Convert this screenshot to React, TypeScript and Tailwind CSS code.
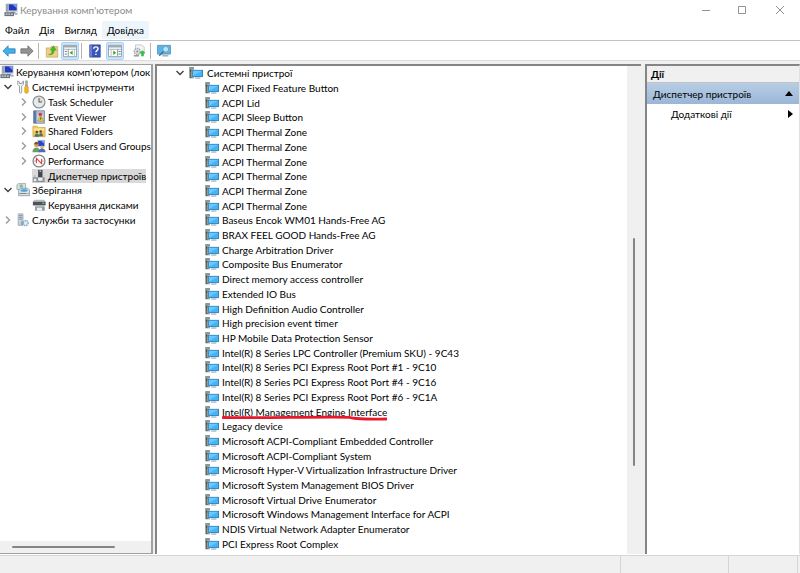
import { useState, type ReactNode } from 'react';
import clsx from 'clsx';

interface TreeItem {
    label: string;
    icon: ReactNode;
    level: number;
    expanded?: boolean;
    selected?: boolean;
}

/* ---------- Icons ---------- */

const Icon = ({ children }: { children: ReactNode }) => (
    <svg viewBox="0 0 16 16" className="h-3.5 w-3.5 shrink-0" aria-hidden="true">
        {children}
    </svg>
);

const ComputerIcon = () => (
    <Icon>
        <path d="M4 0.500h11.500v9.500H4z" fill="#c3ccd8" />
        <path d="M5.500 1.500h9v7h-9z" fill="#2139b8" />
        <path d="M9.500 1.500h5v4.500z" fill="#7d9df0" />
        <path d="M2 1h3v9H2z" fill="#9aa5b1" />
        <path d="M8 10h5v1.500H8z" fill="#8d99a8" />
        <path d="M0.500 10.500h11v4.500h-11z" fill="#6a747e" />
        <path d="M2 12h2v1.500H2zM5 12h2v1.500H5zM8 12h2v1.500H8z" fill="#d8dee4" />
        <path d="M11 11h4.500v2.500h-3z" fill="#a9b2bc" />
    </Icon>
);

const ToolsIcon = () => (
    <Icon>
        <path d="M2 1v4l2 2v7c0 1.300 2.500 1.300 2.500 0V7l2-2V1L7 2.500V4H4V2.500z" fill="#f4f4f4" stroke="#888" strokeWidth="0.900" />
        <path d="M11 1h2v6h-2z" fill="#bbb" stroke="#777" strokeWidth="0.600" />
        <rect x="10" y="7" width="4" height="8" rx="1.500" fill="#f2b91c" stroke="#bb8410" strokeWidth="0.600" />
    </Icon>
);

const ClockIcon = () => (
    <Icon>
        <circle cx="8" cy="8" r="6.800" fill="#e4e9ee" stroke="#8c9196" strokeWidth="1.400" />
        <path d="M8 8V3A5 5 0 0 1 13 8z" fill="#f3d9a5" />
        <path d="M8 3.500V8h3.500" fill="none" stroke="#4c6075" strokeWidth="1.200" />
    </Icon>
);

const EventIcon = () => (
    <Icon>
        <rect x="2" y="1" width="12" height="14" fill="#c3d2e6" stroke="#66768e" />
        <path d="M2 1h3v14H2z" fill="#5a77ae" />
        <path d="M6 3.500h7M6 12.500h7" stroke="#7d8da5" strokeWidth="0.800" />
        <circle cx="9.500" cy="5" r="2" fill="#d63a31" />
        <path d="M10 6.500l3.500 6h-7z" fill="#f7cf2d" stroke="#ac8714" strokeWidth="0.600" />
        <path d="M10 8.500v2.500" stroke="#333" />
    </Icon>
);

const SharedIcon = () => (
    <Icon>
        <path d="M1 2.500h5L7.500 4H15v10.500H1z" fill="#f1c75c" stroke="#c79b3a" strokeWidth="0.700" />
        <path d="M2 5h12v2.500H2z" fill="#ffe49b" />
        <circle cx="5.500" cy="9" r="1.400" fill="#5b4730" />
        <circle cx="10" cy="8.500" r="1.400" fill="#5b4730" />
        <path d="M3 14.500c0-5 5-5 5 0zM8 14c0-5 4.500-5 4.500 0z" fill="#3c7a70" />
    </Icon>
);

const UsersIcon = () => (
    <Icon>
        <path d="M6 1h9v8H6z" fill="#c3ccd8" />
        <path d="M7 2h7v6H7z" fill="#2745c4" />
        <path d="M10 2h4v3.500z" fill="#7fa0f0" />
        <circle cx="5" cy="6.500" r="2.600" fill="#d39a55" />
        <path d="M2.500 6c0-4 5-4 5 0z" fill="#7c5221" />
        <path d="M0.500 15c0-7 9-7 9 0z" fill="#6d9c6b" />
        <circle cx="11.500" cy="9.500" r="2" fill="#e2b37b" />
        <path d="M7.500 15c0-5.500 8-5.500 8 0z" fill="#4b6cb0" />
    </Icon>
);

const PerformanceIcon = () => (
    <Icon>
        <circle cx="8" cy="8" r="6.800" fill="#fff" stroke="#858585" strokeWidth="1.500" />
        <path d="M3.500 9V7M12.500 9V7" stroke="#999" />
        <path d="M5 10.500V5l6 6V5.500" fill="none" stroke="#d84040" strokeWidth="1.200" />
    </Icon>
);

const DeviceIcon = () => (
    <Icon>
        <path d="M7 1h5v8.500H7z" fill="#43494f" />
        <path d="M8.500 1.500h2V3.500h-2z" fill="#aab0b5" />
        <path d="M2.500 7h1.500v3H2.500z" fill="#b4babf" />
        <path d="M1 9.500h13.500v5.500H1z" fill="#8b9197" />
        <path d="M2 11h3v3H2zM7 10h5v3.500H7z" fill="#eceeef" />
    </Icon>
);

const StorageIcon = () => (
    <Icon>
        <path d="M1 2l2-1.500h8v7H1z" fill="#d5dfe6" stroke="#84929c" strokeWidth="0.700" />
        <circle cx="6" cy="3.500" r="2" fill="#7cc583" />
        <path d="M3 8l2-2h8.500l2 2v6.500H3z" fill="#dde3e8" stroke="#7a868f" strokeWidth="0.800" />
        <path d="M5 8.500c0-2 8.500-2 8.500 0s-8.500 2-8.500 0z" fill="#44a5de" />
        <path d="M4 12h8" stroke="#6a7883" />
        <path d="M13 12h1.500" stroke="#34b648" />
    </Icon>
);

const DiskIcon = () => (
    <Icon>
        <path d="M1 4h14.500v4.500H1z" fill="#4e5358" />
        <path d="M1.500 3.500L3 2h10.500L15 3.500z" fill="#b4babf" />
        <path d="M11.500 6H14" stroke="#55e070" strokeWidth="1.200" />
        <path d="M3.500 9.500h11v5h-11z" fill="#8f969c" />
        <path d="M5.500 11h6v3.500h-6z" fill="#eceeef" />
    </Icon>
);

const ServicesIcon = () => (
    <Icon>
        <path d="M2.500 1H8v13H2.500z" fill="#cdd6de" stroke="#8898a5" strokeWidth="0.800" />
        <path d="M3.500 3H7M3.500 5H7M3.500 7H7" stroke="#6b8092" strokeWidth="0.900" />
        <circle cx="11" cy="11.500" r="2.900" fill="#e2e9ef" stroke="#7ba6cb" strokeWidth="1.500" strokeDasharray="1.600 0.800" />
        <path d="M5.500 9.500h3V14h-3z" fill="#86abc9" />
    </Icon>
);

const SystemDeviceIcon = () => (
    <Icon>
        <path d="M0.500 1.500h5V14h-5z" fill="#62686d" />
        <path d="M0.500 1.500h5v2h-5z" fill="#8d9398" />
        <path d="M1 5.500h2.500" stroke="#3b4044" strokeWidth="1.500" />
        <path d="M1.500 3.500h2" stroke="#65c877" />
        <path d="M3 4h13v9H3z" fill="#dcebf5" />
        <path d="M3.500 4.500H16v8H3.500z" fill="#3580b4" />
        <path d="M4.500 5.500H15v6H4.500z" fill="#45b4f7" />
        <path d="M4.500 11.500v-6H15z" fill="#6cc8fb" />
        <path d="M7 13h6v1.500H7z" fill="#a3b5c2" />
    </Icon>
);

const Chevron = ({ open }: { open: boolean }) => (
    <svg viewBox="0 0 10 10" className="h-2.5 w-2.5" aria-hidden="true">
        <path
            d={open ? 'M1.500 3L5 6.500L8.500 3' : 'M3 1.500L6.500 5L3 8.500'}
            fill="none"
            stroke={open ? '#404040' : '#9a9a9a'}
            strokeWidth="1.400"
        />
    </svg>
);

/* ---------- Toolbar icons ---------- */

const BackIcon = () => (
    <Icon>
        <path d="M1 8l6-6v3.500h8v5H7V14z" fill="#3fb2ea" stroke="#2f7fb2" strokeWidth="0.900" />
    </Icon>
);

const ForwardIcon = () => (
    <Icon>
        <path d="M15 8L9 2v3.500H1v5h8V14z" fill="#949494" stroke="#6d6d6d" strokeWidth="0.900" />
    </Icon>
);

const FolderUpIcon = () => (
    <Icon>
        <path d="M1.500 4.500h4.500l1-1.500h7.500v12h-13z" fill="#ecd08a" stroke="#c4a254" strokeWidth="0.800" />
        <path d="M4 12c3 0 4-2 4-5H6l3.500-5L13 7h-2.500c0 4-2.500 6-6.500 5z" fill="#4cb725" stroke="#3c9a1f" strokeWidth="0.500" />
    </Icon>
);

const PaneIcon = ({ right = false }: { right?: boolean }) => (
    <Icon>
        <path d="M0.500 1.500h15v13h-15z" fill="#fff" stroke="#8f959a" />
        <path d="M1 2h14v2H1z" fill="#a2a8ad" />
        <path d="M1 6h14" stroke="#a4a9ae" />
        <path d={right ? 'M11 6v8' : 'M6 6v8'} stroke="#858b91" />
        <path d={right ? 'M12 8.500h2.500M12 11.500h2.500' : 'M2 8.500h2.500M2 11.500h2.500'} stroke="#5a6b7a" />
        <path d={right ? 'M6 7.500v5L9.500 10z' : 'M11 7.500v5L7.500 10z'} fill="#35b22b" />
        <path d={right ? 'M3.500 6v8' : 'M13 6v8'} stroke="#b4b8bb" />
    </Icon>
);

const HelpIcon = () => (
    <Icon>
        <path d="M2 1h12v14H2z" fill="#3a56b8" stroke="#2a3f90" strokeWidth="0.800" />
        <path d="M2.500 1.500h2v13h-2z" fill="#7088d8" />
        <path d="M6.500 5.500c0-3 5-3 5 0 0 2-2.500 1.700-2.500 4" fill="none" stroke="#fff" strokeWidth="1.600" />
        <path d="M8.200 11h1.700v1.700H8.200z" fill="#fff" />
    </Icon>
);

const ScanIcon = () => (
    <Icon>
        <path d="M4 1h7l3 2.500V11H4z" fill="#f2f3f4" stroke="#b4b8ba" strokeWidth="0.800" />
        <circle cx="6" cy="8.500" r="3.500" fill="#e2e4e6" stroke="#9aa0a5" strokeWidth="1.500" strokeDasharray="1.700 0.900" />
        <circle cx="6" cy="8.500" r="1.200" fill="#8a9196" />
        <path d="M2 13.500h6" stroke="#858b8f" strokeWidth="1.500" />
        <path d="M12 7l3.500 3.500h-2V14h-3v-3.500h-2z" fill="#2fc048" />
    </Icon>
);

const MonitorIcon = () => (
    <Icon>
        <path d="M0.500 1.500h15v10h-15z" fill="#58b6ea" stroke="#5f92b3" />
        <circle cx="10" cy="6" r="3.300" fill="#b9e5fb" stroke="#6792ac" strokeWidth="0.900" />
        <path d="M7.500 8.500L2.500 13.500" stroke="#397296" strokeWidth="1.600" />
        <path d="M6 13.500h7" stroke="#8fa9b9" strokeWidth="1.500" />
    </Icon>
);

/* ---------- Data ---------- */

const menuItems = ['Файл', 'Дія', 'Вигляд', 'Довідка'];

const treeItems: TreeItem[] = [
    { label: "Керування комп'ютером (лок", icon: <ComputerIcon />, level: 0 },
    { label: 'Системні інструменти', icon: <ToolsIcon />, level: 1, expanded: true },
    { label: 'Task Scheduler', icon: <ClockIcon />, level: 2, expanded: false },
    { label: 'Event Viewer', icon: <EventIcon />, level: 2, expanded: false },
    { label: 'Shared Folders', icon: <SharedIcon />, level: 2, expanded: false },
    { label: 'Local Users and Groups', icon: <UsersIcon />, level: 2, expanded: false },
    { label: 'Performance', icon: <PerformanceIcon />, level: 2, expanded: false },
    { label: 'Диспетчер пристроїв', icon: <DeviceIcon />, level: 2, selected: true },
    { label: 'Зберігання', icon: <StorageIcon />, level: 1, expanded: true },
    { label: 'Керування дисками', icon: <DiskIcon />, level: 2 },
    { label: 'Служби та застосунки', icon: <ServicesIcon />, level: 1, expanded: false },
];

const markedDevice = 'Intel(R) Management Engine Interface';

const devices = [
    'ACPI Fixed Feature Button',
    'ACPI Lid',
    'ACPI Sleep Button',
    'ACPI Thermal Zone',
    'ACPI Thermal Zone',
    'ACPI Thermal Zone',
    'ACPI Thermal Zone',
    'ACPI Thermal Zone',
    'ACPI Thermal Zone',
    'Baseus Encok WM01 Hands-Free AG',
    'BRAX FEEL GOOD Hands-Free AG',
    'Charge Arbitration Driver',
    'Composite Bus Enumerator',
    'Direct memory access controller',
    'Extended IO Bus',
    'High Definition Audio Controller',
    'High precision event timer',
    'HP Mobile Data Protection Sensor',
    'Intel(R) 8 Series LPC Controller (Premium SKU) - 9C43',
    'Intel(R) 8 Series PCI Express Root Port #1 - 9C10',
    'Intel(R) 8 Series PCI Express Root Port #4 - 9C16',
    'Intel(R) 8 Series PCI Express Root Port #6 - 9C1A',
    markedDevice,
    'Legacy device',
    'Microsoft ACPI-Compliant Embedded Controller',
    'Microsoft ACPI-Compliant System',
    'Microsoft Hyper-V Virtualization Infrastructure Driver',
    'Microsoft System Management BIOS Driver',
    'Microsoft Virtual Drive Enumerator',
    'Microsoft Windows Management Interface for ACPI',
    'NDIS Virtual Network Adapter Enumerator',
    'PCI Express Root Complex',
];

/* ---------- Parts ---------- */

const TitleBar = () => (
    <header className="flex h-5 items-center pl-1 text-[#8c8c8c]">
        <ComputerIcon />
        <h1 className="ml-0.5 flex-1">Керування комп'ютером</h1>
        <div className="flex h-full">
            <button type="button" aria-label="Згорнути" className="grid w-9 place-items-center">
                <svg viewBox="0 0 10 10" className="h-2.5 w-2.5"><path d="M1 5.500h8" stroke="#929292" /></svg>
            </button>
            <button type="button" aria-label="Розгорнути" className="grid w-9 place-items-center">
                <svg viewBox="0 0 10 10" className="h-2.5 w-2.5"><path d="M1.500 1.500h7v7h-7z" fill="none" stroke="#929292" /></svg>
            </button>
            <button type="button" aria-label="Закрити" className="grid w-10 place-items-center">
                <svg viewBox="0 0 10 10" className="h-2.5 w-2.5"><path d="M1 1l8 8M9 1L1 9" stroke="#929292" /></svg>
            </button>
        </div>
    </header>
);

const ToolButton = ({ label, active = false, children }: { label: string; active?: boolean; children: ReactNode }) => (
    <button
        type="button"
        aria-label={label}
        className={clsx('grid h-[18px] w-[18px] place-items-center', active && 'rounded-xs border border-[#a9d5f6] bg-[#cce6fb]')}
    >
        {children}
    </button>
);

const Separator = () => <span className="mr-1 ml-0.5 h-4 w-px bg-[#b4b4b4]" />;

const Toolbar = () => (
    <div className="flex h-5 items-center border-b border-[#dcdcdc]">
        <ToolButton label="Назад"><BackIcon /></ToolButton>
        <ToolButton label="Вперед"><ForwardIcon /></ToolButton>
        <Separator />
        <ToolButton label="На рівень вище"><FolderUpIcon /></ToolButton>
        <ToolButton label="Дерево консолі" active><PaneIcon /></ToolButton>
        <Separator />
        <ToolButton label="Довідка"><HelpIcon /></ToolButton>
        <span className="w-0.5" />
        <ToolButton label="Область дій" active><PaneIcon right /></ToolButton>
        <span className="w-1.5" />
        <ToolButton label="Оновити конфігурацію"><ScanIcon /></ToolButton>
        <Separator />
        <ToolButton label="Властивості"><MonitorIcon /></ToolButton>
    </div>
);

const TreeRow = ({ item }: { item: TreeItem }) => {
    const [open, setOpen] = useState(item.expanded ?? false);

    return (
        <li
            role="treeitem"
            aria-selected={item.selected ?? false}
            className={clsx('flex min-h-0 flex-1 items-center', item.level === 2 && 'pl-4')}
        >
            {item.level > 0 && (
                <span className="grid w-4 shrink-0 place-items-center">
                    {item.expanded !== undefined && (
                        <button type="button" aria-label={item.label} onClick={() => setOpen(!open)}>
                            <Chevron open={open} />
                        </button>
                    )}
                </span>
            )}
            <span className={clsx('flex items-center gap-0.5 whitespace-nowrap', item.selected && 'bg-[#d9d9d9]')}>
                {item.icon}
                {item.label}
            </span>
        </li>
    );
};

const ConsoleTree = () => (
    <nav className="flex w-[153px] shrink-0 flex-col overflow-hidden border-t border-r-2 border-b border-[#a0a0a0] bg-white">
        <ul role="tree" className="flex h-[162px] flex-col leading-[14px]">
            {treeItems.map((item) => (
                <TreeRow key={item.label} item={item} />
            ))}
        </ul>
        <div className="mt-auto flex h-3 items-center bg-[#f0f0f0] pr-9 pl-3">
            <span className="h-0.5 flex-1 rounded-full bg-[#858585]" />
        </div>
    </nav>
);

const Underline = () => (
    <svg
        viewBox="0 0 166 6"
        preserveAspectRatio="none"
        className="absolute top-2.5 left-0 h-1.5 w-full"
        aria-hidden="true"
    >
        <path d="M1 2.500C40 3.200 90 1.800 128 2.300C134 4 140 4.200 165 4" fill="none" stroke="#e8192c" strokeWidth="2.800" strokeLinecap="round" />
    </svg>
);

const DeviceList = () => (
    <main className="mr-0.5 flex min-w-0 flex-1 border-t-2 border-l-2 border-[#858585] bg-white">
        <ul className="flex h-[485px] min-w-0 flex-1 flex-col overflow-hidden pl-4 leading-[14px] whitespace-nowrap">
            <li className="flex min-h-0 flex-1 items-center">
                <button type="button" aria-label="Згорнути групу" className="mr-1 ml-0.5">
                    <Chevron open />
                </button>
                <span className="flex items-center gap-1">
                    <SystemDeviceIcon />
                    Системні пристрої
                </span>
            </li>
            {devices.map((name, i) => (
                <li key={i} className="flex min-h-0 flex-1 items-center gap-[3px] pl-8">
                    <SystemDeviceIcon />
                    <span className="relative">
                        {name}
                        {name === markedDevice && <Underline />}
                    </span>
                </li>
            ))}
        </ul>
        <div className="flex w-3.5 shrink-0 flex-col items-center bg-[#f0f0f0] pt-[172px] pb-[88px]">
            <span className="w-0.5 flex-1 rounded-full bg-[#858585]" />
        </div>
    </main>
);

const ActionsPane = () => (
    <aside className="w-[155px] shrink-0 border-t-2 border-r border-l-2 border-t-[#858585] border-r-[#e0e0e0] border-l-[#858585] bg-white">
        <h2 className="h-[17px] border-b border-[#c4c4c4] bg-[#f0f0f0] pl-1 leading-4 font-bold">Дії</h2>
        <button type="button" className="flex h-[21px] w-full items-center justify-between bg-linear-to-b from-[#b7cde5] to-[#9bb7d7] px-1.5">
            Диспетчер пристроїв
            <svg viewBox="0 0 8 5" className="h-[5px] w-2"><path d="M0 5l4-5 4 5z" fill="#000" /></svg>
        </button>
        <button type="button" className="flex h-[19px] w-full items-center justify-between pr-1.5 pl-6">
            Додаткові дії
            <svg viewBox="0 0 5 8" className="h-2 w-[5px]"><path d="M0 0l5 4-5 4z" fill="#000" /></svg>
        </button>
    </aside>
);

export default function App() {
    return (
        <div className="flex min-h-screen flex-col bg-white font-['Lato','Open_Sans',sans-serif] text-[10px] leading-4 text-black">
            <TitleBar />
            <nav className="flex h-[21px] items-center border-b border-[#c3c3c3]">
                {menuItems.map((label) => (
                    <button
                        key={label}
                        type="button"
                        className={clsx('h-[18px] px-[5px]', label === 'Довідка' && 'rounded-xs bg-[#edf5fc]')}
                    >
                        {label}
                    </button>
                ))}
            </nav>
            <Toolbar />
            <div className="flex flex-1 gap-0.5 bg-[#f0f0f0] pt-[3px]">
                <ConsoleTree />
                <DeviceList />
                <ActionsPane />
            </div>
            <footer className="mt-px flex h-[18px] border-t border-[#d5d5d5] bg-[#f0f0f0]">
                <span className="flex-1 border-r border-[#d5d5d5]" />
                <span className="w-[108px] border-r border-[#d5d5d5]" />
                <span className="w-[69px] border-r border-[#d5d5d5]" />
                <span className="w-0.5" />
            </footer>
        </div>
    );
}
